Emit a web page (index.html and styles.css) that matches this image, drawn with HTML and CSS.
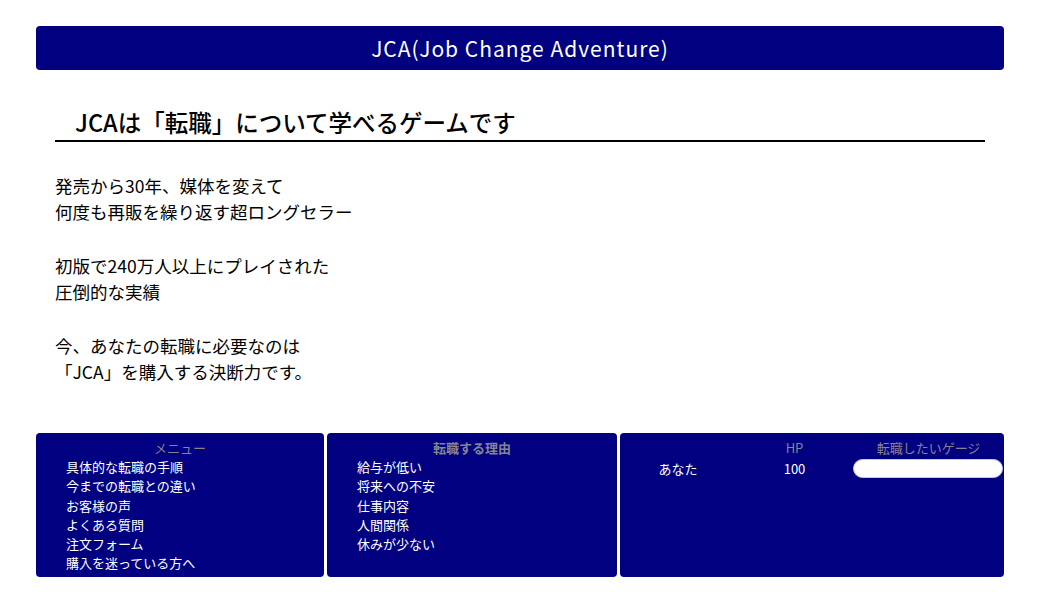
FILE: index.html
```html
<!DOCTYPE html>
<html lang="ja">
<head>
<meta charset="utf-8">
<title>JCA(Job Change Adventure)</title>
<link rel="stylesheet" href="styles.css">
</head>
<body>
<div class="page">
  <header class="topbar">JCA(Job Change Adventure)</header>
  <main class="intro">
    <h2 class="headline">JCAは「転職」について学べるゲームです</h2>
    <p class="lead">発売から30年、媒体を変えて<br>何度も再販を繰り返す超ロングセラー</p>
    <p class="lead">初版で240万人以上にプレイされた<br>圧倒的な実績</p>
    <p class="lead">今、あなたの転職に必要なのは<br>「JCA」を購入する決断力です。</p>
  </main>
  <section class="panels">
    <div class="panel menu">
      <div class="panel-title">メニュー</div>
      <ul class="list">
        <li>具体的な転職の手順</li>
        <li>今までの転職との違い</li>
        <li>お客様の声</li>
        <li>よくある質問</li>
        <li>注文フォーム</li>
        <li>購入を迷っている方へ</li>
      </ul>
    </div>
    <div class="panel reasons">
      <div class="panel-title bold">転職する理由</div>
      <ul class="list">
        <li>給与が低い</li>
        <li>将来への不安</li>
        <li>仕事内容</li>
        <li>人間関係</li>
        <li>休みが少ない</li>
      </ul>
    </div>
    <div class="panel status">
      <div class="status-grid">
        <div class="cell"></div>
        <div class="cell head">HP</div>
        <div class="cell head">転職したいゲージ</div>
        <div class="cell">あなた</div>
        <div class="cell">100</div>
        <div class="cell gauge-cell"><div class="gauge"></div></div>
      </div>
    </div>
  </section>
</div>
</body>
</html>
```
FILE: styles.css
```css
* { box-sizing: border-box; }
html, body { margin: 0; padding: 0; background: #fff; }
body {
  font-family: "Noto Sans CJK JP", "Noto Sans", sans-serif;
  color: #000;
}
.page {
  padding: 26px 33px 0 36px;
}
.topbar {
  background: #000080;
  color: #fff;
  height: 44px;
  border-radius: 4px;
  text-align: center;
  font-size: 21px;
  line-height: 44px;
  letter-spacing: 1px;
}
.intro {
  padding: 34px 19px 0 19px;
}
.headline {
  margin: 0;
  padding-left: 20px;
  font-size: 23.5px;
  font-weight: 500;
  line-height: 36px;
  border-bottom: 2px solid #000;
}
.lead {
  margin: 31px 0 28px 0;
  font-size: 17.5px;
  line-height: 26px;
}
.lead + .lead { margin-top: 0; }
.panels {
  margin-top: 48px;
  display: grid;
  grid-template-columns: 288px 290px 1fr;
  gap: 3px;
}
.panel {
  background: #000080;
  color: #fff;
  height: 144px;
  border-radius: 4px;
  padding-top: 5px;
  font-size: 13px;
}
.panel-title {
  color: #858590;
  text-align: center;
  line-height: 19px;
}
.panel-title.bold { font-weight: 700; }
.list {
  list-style: none;
  margin: 0;
  padding: 0 0 0 30px;
}
.list li {
  line-height: 19.3px;
}
.status-grid {
  display: grid;
  grid-template-columns: 116px 117px 1fr;
  grid-template-rows: 19px 22px;
  align-items: center;
}
.cell { text-align: center; }
.cell.head { color: #858590; }
.gauge-cell { padding-right: 1px; }
.gauge {
  height: 19px;
  background: #fff;
  border: 1px solid #c8c8e0;
  border-radius: 10px;
}
```
